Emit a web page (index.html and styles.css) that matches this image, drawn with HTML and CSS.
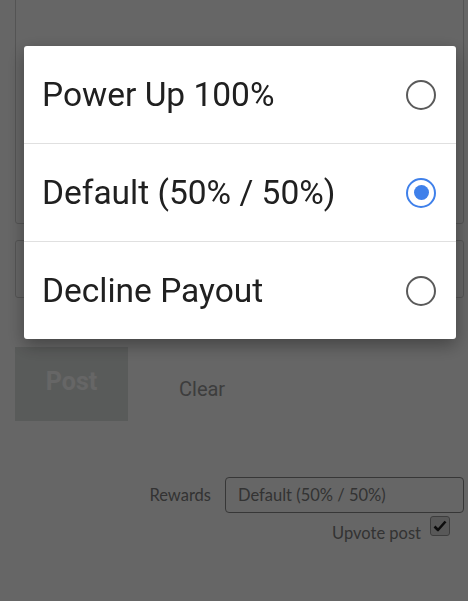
FILE: index.html
```html
<!DOCTYPE html>
<html>
<head>
    <title>New Post</title>
    <link rel="stylesheet" href="styles.css">
</head>
<body>
    <div class="page">
        <div class="editor"></div>
        <div class="tags-input"></div>
        <div class="actions">
            <button class="btn-post" type="button">Post</button>
            <button class="btn-clear" type="button">Clear</button>
        </div>
        <div class="options">
            <div class="option-row">
                <label class="option-label" for="rewards">Rewards</label>
                <div class="select-box" id="rewards">Default (50% / 50%)</div>
            </div>
            <div class="option-row upvote-row">
                <span class="option-label">Upvote post</span>
                <span class="check-box">
                    <svg width="14" height="14" viewBox="0 0 14 14">
                        <path d="M1.5 7.5 L5 11 L12.5 2.5" fill="none" stroke="#222" stroke-width="2.6" stroke-linejoin="round"/>
                    </svg>
                </span>
            </div>
        </div>
    </div>

    <div class="overlay">
        <div class="dialog">
            <div class="choice">
                <span class="choice-text">Power Up 100%</span>
                <span class="radio"></span>
            </div>
            <div class="choice">
                <span class="choice-text">Default (50% / 50%)</span>
                <span class="radio checked"></span>
            </div>
            <div class="choice">
                <span class="choice-text">Decline Payout</span>
                <span class="radio"></span>
            </div>
        </div>
    </div>
</body>
</html>
```

FILE: styles.css
```css
html, body {
    margin: 0;
    padding: 0;
    background: #fff;
    height: 100%;
    overflow: hidden;
}
.page {
    padding: 0 4px 0 15px;
    font-family: Lato, "Open Sans", sans-serif;
}
.editor {
    margin-top: -20px;
    height: 242px;
    border: 1px solid #d2d2d2;
    border-radius: 3px;
}
.tags-input {
    margin-top: 16px;
    height: 56px;
    border: 1px solid #d2d2d2;
    border-radius: 3px;
}
.actions {
    display: flex;
    align-items: center;
    margin-top: 49px;
}
.btn-post {
    width: 113px;
    height: 74px;
    padding: 0 0 6px;
    background: #dfe3e1;
    color: #fff;
    border: none;
    font-family: Roboto, Arial, sans-serif;
    font-weight: bold;
    font-size: 25px;
}
.btn-clear {
    margin-left: 51px;
    padding: 10px 0 0;
    background: none;
    border: none;
    color: #999;
    font-family: Roboto, Arial, sans-serif;
    font-size: 20px;
}
.options {
    margin-top: 56px;
    display: flex;
    flex-direction: column;
    align-items: flex-end;
}
.option-row {
    display: flex;
    align-items: center;
}
.option-label {
    color: #808080;
    font-size: 16.5px;
}
.select-box {
    box-sizing: border-box;
    width: 239px;
    height: 36px;
    margin-left: 14px;
    padding: 7px 12px;
    border: 1px solid #8a8a8a;
    border-radius: 4px;
    color: #808080;
    font-size: 16.5px;
}
.upvote-row {
    margin-top: 3px;
    margin-right: 14px;
    align-items: flex-start;
}
.upvote-row .option-label {
    margin-top: 7px;
}
.check-box {
    box-sizing: border-box;
    display: flex;
    align-items: center;
    justify-content: center;
    width: 20px;
    height: 20px;
    margin-left: 9px;
    border: 1px solid #999;
    border-radius: 3px;
    background: #ddd;
}
.overlay {
    position: fixed;
    top: 0;
    left: 0;
    right: 0;
    bottom: 0;
    background: rgba(0, 0, 0, 0.6);
    padding: 46px 12px 0 24px;
}
.dialog {
    background: #fff;
    border-radius: 3px;
    box-shadow: 0 6px 18px rgba(0, 0, 0, 0.35);
}
.choice {
    display: flex;
    align-items: center;
    justify-content: space-between;
    height: 97px;
    padding: 0 20px 0 18px;
    border-top: 1px solid #e0e0e0;
}
.choice:first-child {
    border-top: none;
}
.choice-text {
    font-family: Roboto, Arial, sans-serif;
    font-size: 33.5px;
    color: #202020;
}
.radio {
    box-sizing: border-box;
    width: 30px;
    height: 30px;
    border: 2.5px solid #5a5a5a;
    border-radius: 50%;
    display: flex;
    align-items: center;
    justify-content: center;
}
.radio.checked {
    border-color: #3f80ea;
}
.radio.checked::after {
    content: "";
    width: 15px;
    height: 15px;
    border-radius: 50%;
    background: #3f80ea;
}
```
